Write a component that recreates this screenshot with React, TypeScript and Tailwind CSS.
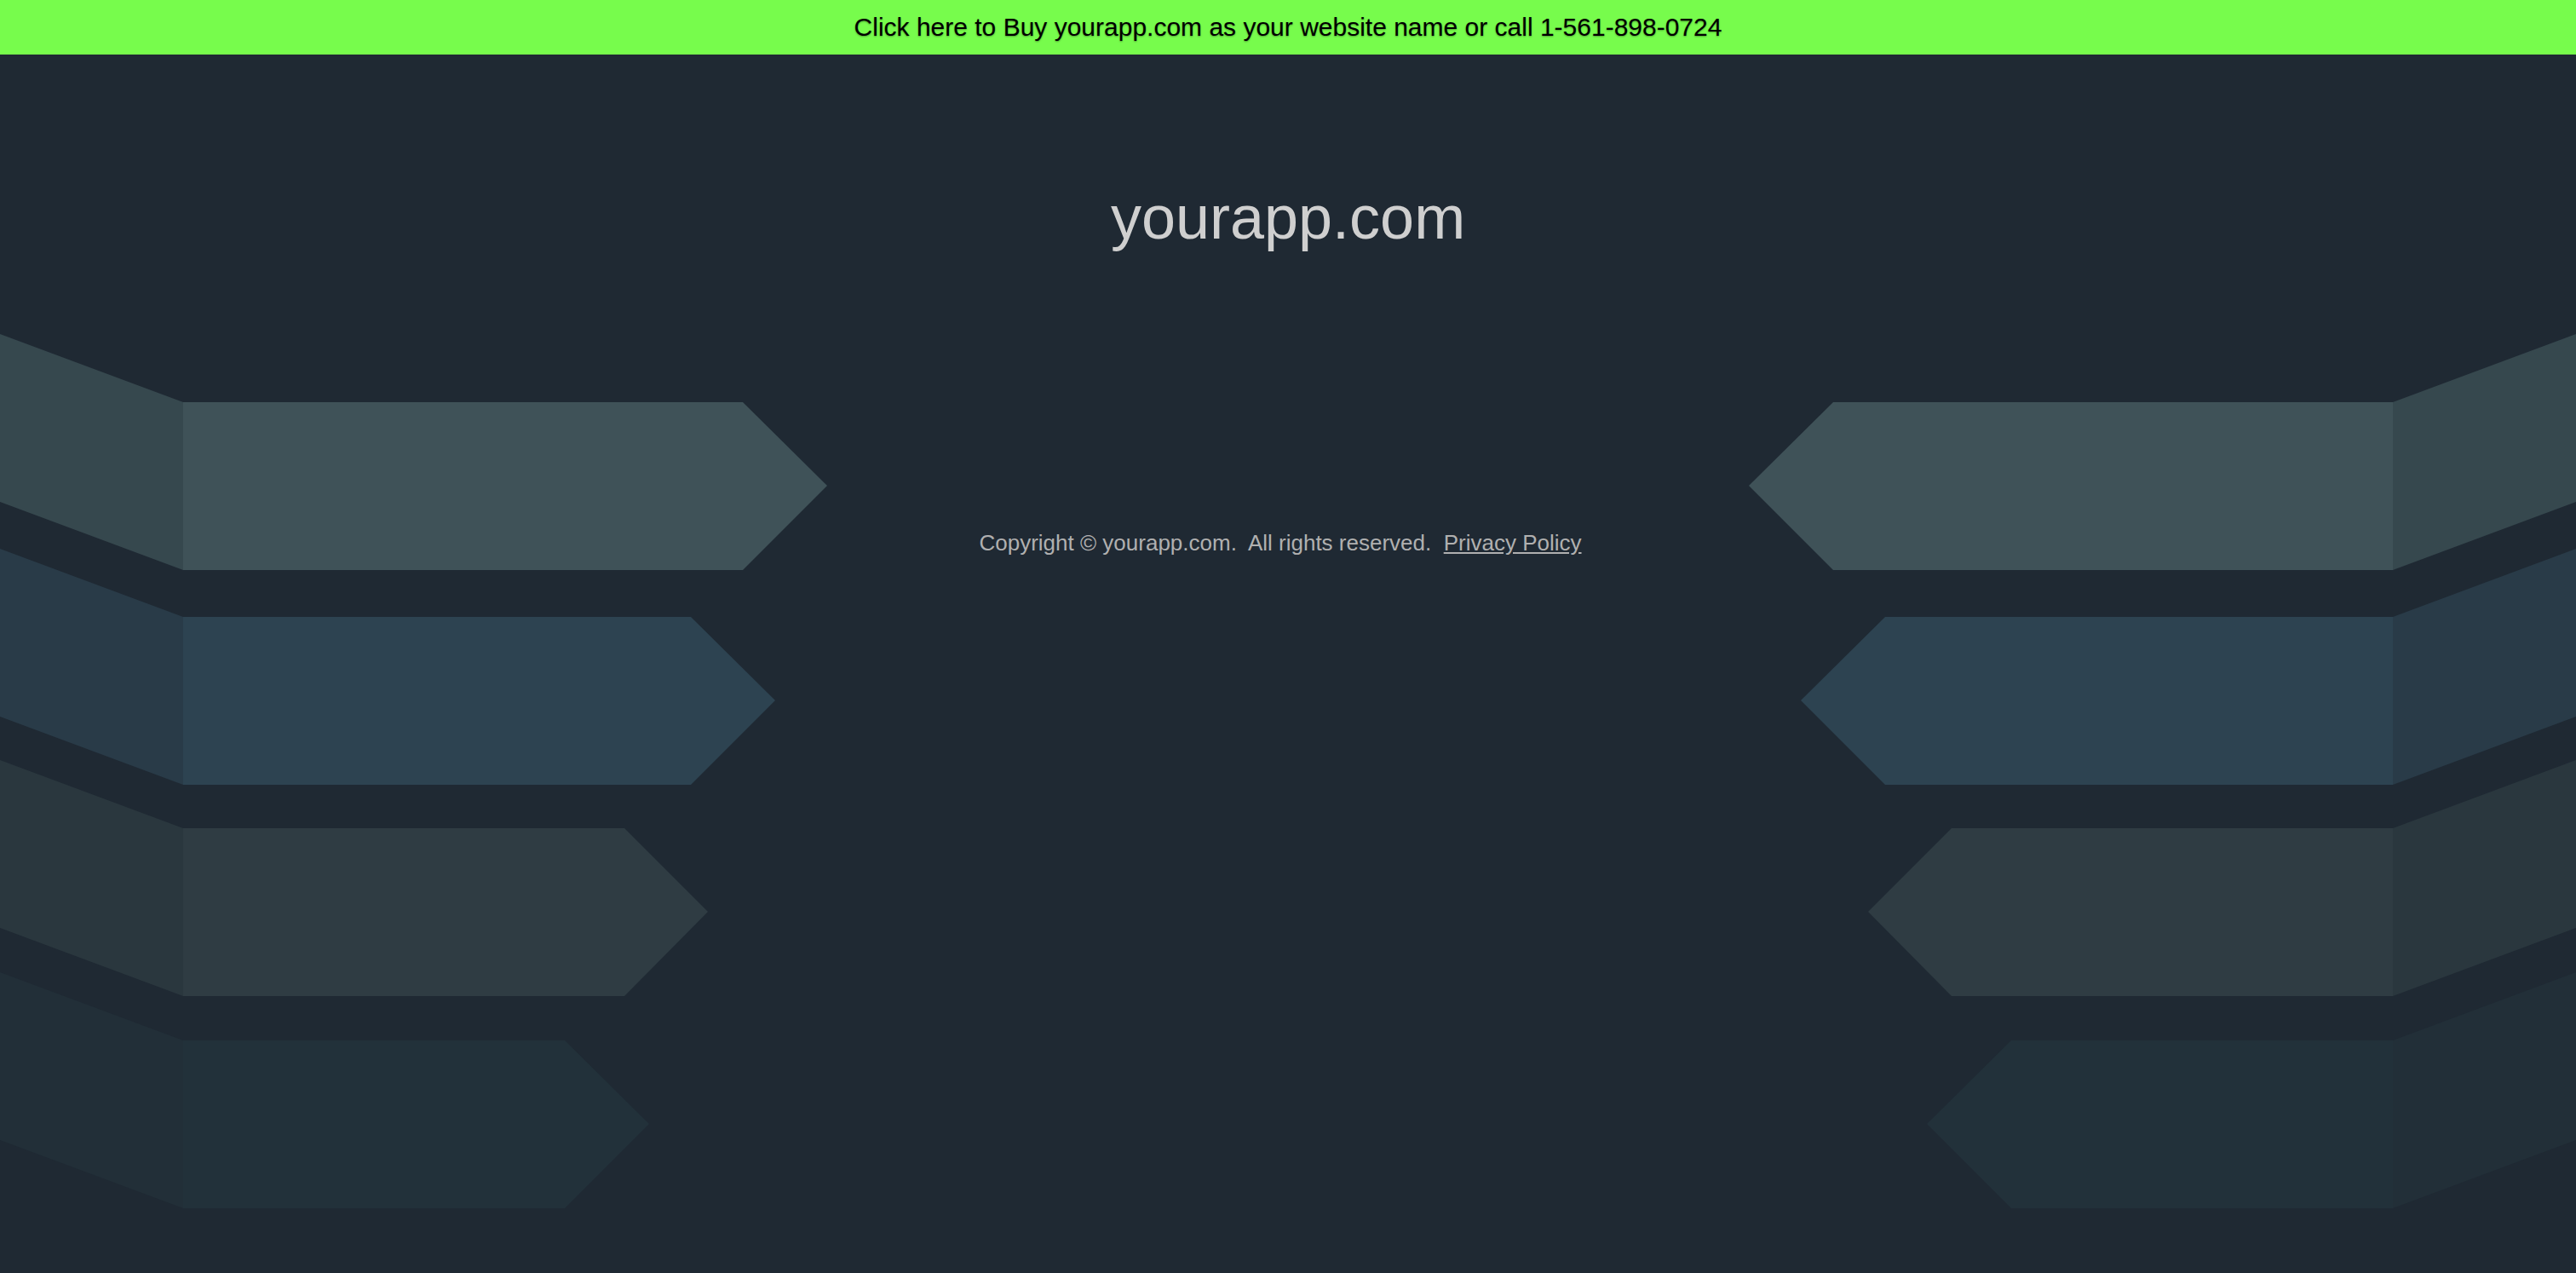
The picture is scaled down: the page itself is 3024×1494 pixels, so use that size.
import React from 'react';

type Row = {
  top: number;
  front: string;
  back: string;
  right: number;
  tip: number;
};

// stacked arrow slabs on the left; the right side is the same drawing mirrored
const rows: Row[] = [
  { top: 0, right: 872, tip: 971, front: '#3f5258', back: '#36484e' },
  { top: 252, right: 811, tip: 910, front: '#2d4351', back: '#293b48' },
  { top: 500, right: 733, tip: 831, front: '#2f3c43', back: '#2a373e' },
  { top: 749, right: 663, tip: 762, front: '#22313a', back: '#222f38' },
];

const Slabs = ({ mirrored }: { mirrored?: boolean }) => (
  <svg
    width={971}
    height={1028}
    viewBox="0 0 971 1028"
    className={`shrink-0 block ${mirrored ? '-scale-x-100' : ''}`}
  >
    {rows.map((r, i) => {
      const ft = r.top + 80;
      const fb = ft + 197;
      const mid = ft + 98;
      return (
        <g key={i}>
          <polygon points={`0,${r.top} 215,${ft} 215,${fb} 0,${r.top + 197}`} fill={r.back} />
          <polygon
            points={`215,${ft} ${r.right},${ft} ${r.tip},${mid} ${r.right},${fb} 215,${fb}`}
            fill={r.front}
          />
        </g>
      );
    })}
  </svg>
);

export default function App() {
  return (
    <div className="min-h-screen w-full bg-[#1f2933] font-['Liberation_Sans',Arial,sans-serif] overflow-hidden">
      <a
        href="#"
        className="flex h-[64px] items-center justify-center bg-[#77fc4c] text-[30px] leading-none text-black [text-shadow:0_1px_2px_rgba(0,0,0,0.35)]"
      >
        Click here to Buy yourapp.com as your website name or call 1-561-898-0724
      </a>

      <div className="pt-[155px] text-center text-[72px] leading-none text-[#cfcfcf]">
        yourapp.com
      </div>

      <div className="mt-[101px] flex w-full">
        <Slabs />
        <div className="flex flex-1 justify-center pt-[232px] pr-[18px]">
          <p className="text-[26px] leading-none text-[#b0b0b0] whitespace-nowrap">
            Copyright © yourapp.com.{'\u00a0'} All rights reserved.{'\u00a0'}{' '}
            <a href="#" className="underline">
              Privacy Policy
            </a>
          </p>
        </div>
        <Slabs mirrored />
      </div>
    </div>
  );
}
